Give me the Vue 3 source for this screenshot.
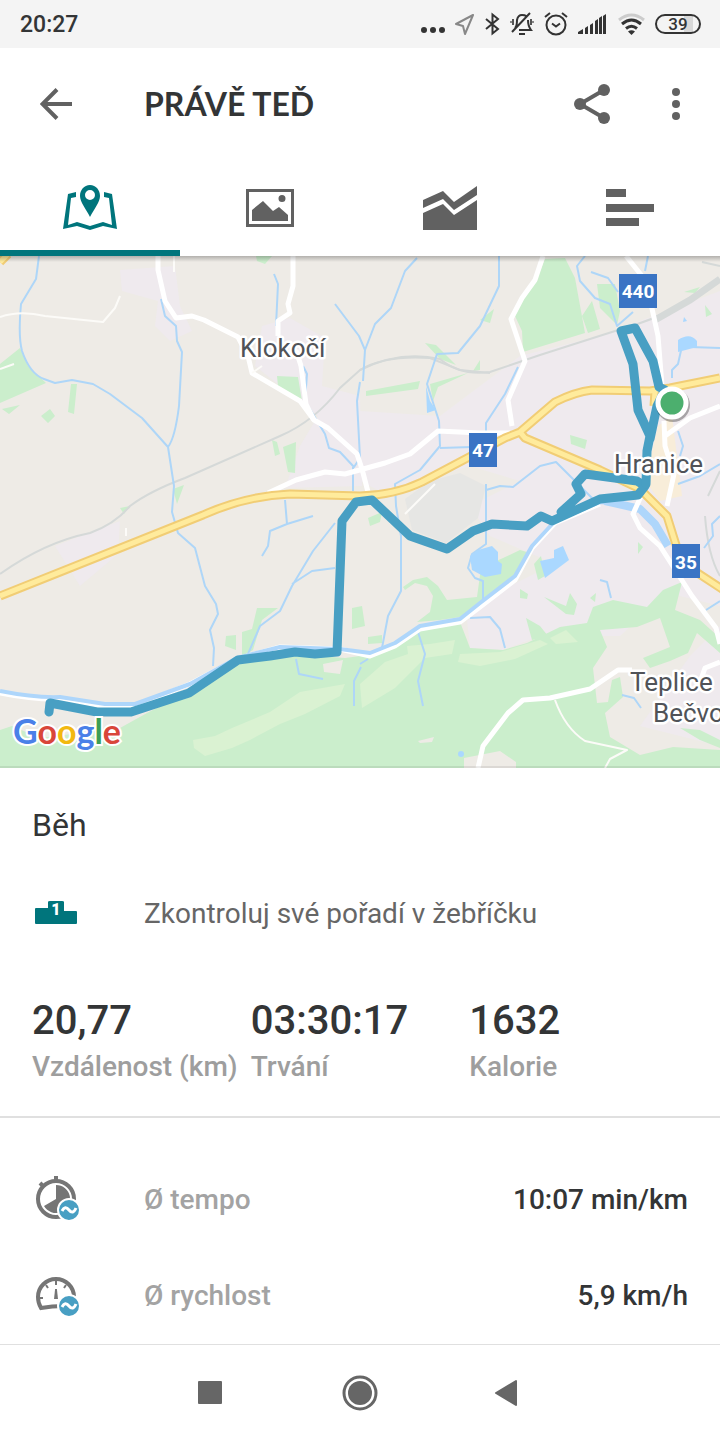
<template>
    <div class="tela">
        <div class="status">
            <span class="hora">20:27</span>
            <div class="status-icones">
                <svg width="24" height="24" viewBox="0 0 24 24" fill="#333">
                    <circle cx="3" cy="18" r="3" />
                    <circle cx="12" cy="18" r="3" />
                    <circle cx="21" cy="18" r="3" />
                </svg>
                <svg width="20" height="24" viewBox="0 0 20 24" fill="none" stroke="#888" stroke-width="2" stroke-linejoin="round">
                    <path d="M18 3L1 12L8 14L10 22Z" />
                </svg>
                <svg width="15" height="24" viewBox="0 0 15 24" fill="none" stroke="#333" stroke-width="2">
                    <path d="M1 7L13 17L7.500 21.500V2.500L13 7L1 17" />
                </svg>
                <svg width="24" height="24" viewBox="0 0 24 24" fill="none" stroke="#333" stroke-width="2">
                    <path d="M5 16Q7 14 7 8Q8 3 12 3Q15 3 16 4M18 8Q18 14 21 18H9M2 20L20 1M9 22H15" />
                    <path d="M3 7V13M21 7V13" stroke="#555" stroke-width="2" />
                    <path d="M1 9V11M23 9V11" stroke="#888" stroke-width="2" />
                </svg>
                <svg width="24" height="24" viewBox="0 0 24 24" fill="none" stroke="#333" stroke-width="2">
                    <circle cx="12" cy="13" r="9.500" />
                    <path d="M8 11.500L12 14.500L16 11.500M1 5L6 1M18 1L23 5" />
                </svg>
                <svg width="30" height="24" viewBox="0 0 30 24" fill="#333">
                    <path d="M0 22V20L5 17V22ZM7 22V16L10 14V22ZM12 22V13L15 11V22ZM17 22V9L20 7V22ZM21 22V6L24 4V22ZM25 22V4L28 2V22Z" />
                </svg>
                <svg width="27" height="24" viewBox="0 0 27 24" fill="none" stroke="#333" stroke-width="3">
                    <path d="M1 8Q13.500 -2 26 8" stroke="#ccc" />
                    <path d="M4 12Q13.500 4 23 12M8 16.500Q13.500 12 19 16.500" />
                    <path d="M10 19.500L13.500 23L17 19.500Q13.500 17 10 19.500Z" fill="#333" stroke="none" />
                </svg>
                <span class="bateria">39</span>
            </div>
        </div>

        <header class="topo">
            <button class="botao" aria-label="Zpět">
                <svg width="32" height="32" viewBox="0 0 32 32" fill="none" stroke="#616161" stroke-width="4">
                    <path d="M32 16H3M17 1.500L2.500 16L17 30.500" />
                </svg>
            </button>
            <h1>PRÁVĚ TEĎ</h1>
            <button class="botao" aria-label="Sdílet">
                <svg width="36" height="40" viewBox="0 0 36 40" fill="#616161" stroke="#616161">
                    <path d="M30 6L6 20L30 34" fill="none" stroke-width="4" />
                    <circle cx="30" cy="6" r="6" stroke="none" />
                    <circle cx="6" cy="20" r="6" stroke="none" />
                    <circle cx="30" cy="34" r="6" stroke="none" />
                </svg>
            </button>
            <button class="botao" aria-label="Další možnosti">
                <svg width="8" height="32" viewBox="0 0 8 32" fill="#616161">
                    <circle cx="4" cy="4" r="4" />
                    <circle cx="4" cy="16" r="4" />
                    <circle cx="4" cy="28" r="4" />
                </svg>
            </button>
        </header>

        <nav class="abas">
            <button v-for="aba in abas" :key="aba.id" class="aba" :class="{ ativa: aba.id === ativa }"
                :aria-label="aba.nome" @click="ativa = aba.id">
                <svg width="54" height="46" viewBox="0 0 54 46" fill="currentColor">
                    <path v-for="d in aba.formas" :key="d" :d="d" fill-rule="evenodd" />
                </svg>
            </button>
        </nav>

        <svg class="mapa" viewBox="0 0 720 512" preserveAspectRatio="xMidYMid slice" role="img" aria-label="Mapa trasy">
            <defs>
                <linearGradient id="sombra" x1="0" y1="0" x2="0" y2="1">
                    <stop offset="0" stop-color="#000" stop-opacity="0.25" />
                    <stop offset="1" stop-color="#000" stop-opacity="0" />
                </linearGradient>
            </defs>
            <rect width="720" height="512" fill="#eeebe6" />

            <!-- zástavba -->
            <g fill="#efeaee">
                <path d="M120 14L175 10L180 50L192 75L170 85L155 70L158 45L122 35Z" />
                <path d="M262 70L290 62L325 82L322 130L360 140L362 230L285 232L300 190L318 160L255 110Z" />
                <path d="M360 155L440 160L520 100L600 80L720 35V350L680 340L620 300L560 310L490 280L470 250L520 225L470 210L380 235L360 225Z" />
                <path d="M55 290L120 265L118 298L80 330Z" />
                <path d="M467 365L490 340L540 315L600 300L680 300L680 325L620 380L540 380L503 394L470 392Z" />
                <path d="M720 370L690 400L640 470L720 490Z" />
            </g>
            <path d="M405 243L430 225L460 217L486 230L478 262L446 287L412 274Z" fill="#e6e6e4" />
            <path d="M658 170L672 160L682 240L660 245L645 225Z" fill="#f8edd9" />

            <!-- lesy a parky -->
            <g fill="#cbeecc">
                <path d="M0 512V474L12 470L40 482L120 472L147 457L190 435L237 403L300 396L318 400L345 402L360 400L385 392L420 371L460 366L467 384L470 392L503 394L527 387L560 371L587 367L593 351L613 344L647 351L663 334L682 326L675 354L700 364L720 382V397L697 377L688 397L670 405L650 412L643 402L670 391L660 362L637 371L600 374L607 391L593 412L597 447L608 446L612 424L620 421L623 441L605 457L610 481L640 499L673 491L720 494V512Z" />
                <path d="M403 331L413 324L427 321L438 330L447 344L477 341L481 312L503 302L520 294L530 297L520 317L480 349L460 361L440 364L417 366L430 356L433 340L427 330L415 327L405 334ZM368 381L382 379L382 387L368 388ZM680 472L700 474L720 484V492L700 484Z" />
                <path d="M0 108L20 92L28 110L46 127L0 147Z" />
                <path d="M2 153L20 149L9 158ZM41 160L50 153L55 160L48 167ZM71 128H77L74 158L68 156Z" />
                <path d="M277 120L298 121L302 145L278 130ZM272 184L277 186L280 198L275 200ZM283 191L296 186L295 217L288 216ZM173 233L184 229L177 248ZM256 0H272L265 8L257 5ZM120 252L130 250L124 258ZM368 262L382 256L380 266L370 270Z" />
                <path d="M545 3L565 2L575 22L585 77L523 96L522 75L515 60L524 38L536 25ZM582 60L592 45L600 73L588 77ZM597 28L615 28L620 55L617 69L600 52Z" />
                <path d="M480 64L494 53L490 67ZM425 87L436 89L456 109L440 103ZM473 115L480 104L480 114ZM430 128L468 117L438 131L433 145ZM366 135L420 125L418 133L366 140ZM570 179L587 184L585 193L571 188Z" />
                <path d="M257 352L278 352L262 364L253 394L242 400V376L252 373ZM226 380L236 379L236 394L225 390ZM352 352L362 350L365 370L352 373Z" />
                <path d="M520 333L528 338L527 343L520 342ZM544 341L566 350L570 337L577 348L574 359L566 358ZM526 362L540 370L548 380L532 384ZM590 342L596 337L595 346ZM638 286L643 291L638 298ZM534 308L541 300L545 320L538 324ZM705 49L712 58L706 61ZM684 36L700 31L695 37Z" />
            </g>
            <g fill="#daf2d2">
                <path d="M193 484L215 480L232 472L270 456L300 436L345 428L340 440L305 458L280 468L250 484L232 492L205 500L194 492Z" />
                <path d="M407 390L430 388L455 384L452 398L425 402L395 432L362 452L360 428L385 406L408 398ZM460 398L500 396L540 384L548 388L515 403L480 410L458 406ZM550 382L566 374L578 386L556 388Z" />
            </g>
            <path d="M323 408L343 404L340 418L324 416ZM418 485L434 481L432 486L420 487ZM464 502L500 495L516 506V512H464Z" fill="#eeebe6" />

            <!-- železnice -->
            <g fill="none" stroke="#d5d9d8" stroke-width="2">
                <path d="M0 318Q45 286 90 277Q115 268 130 250Q150 235 185 222L280 180Q315 165 340 132L360 114Q400 94 440 103Q460 120 490 116L540 99L615 75Q650 66 690 45L720 24" />
                <path d="M360 114Q385 99 430 102L460 114L490 117" />
                <path d="M705 260Q708 300 720 320M708 240L720 215M702 6L720 10" />
            </g>
            <path d="M655 64L690 44L720 23" fill="none" stroke="#d5d9d8" stroke-width="7" />

            <!-- vodní toky -->
            <g fill="none" stroke="#aed6f8" stroke-width="2" stroke-linejoin="round">
                <path d="M39 0L36 23L21 48Q18 80 22 95Q30 118 44 123L55 127L72 124L93 128L110 138L142 162L168 191L174 230L172 256L178 277L195 292L205 330L216 348L218 358L210 374L214 392L213 410" />
                <path d="M161 43L165 60L176 70L177 85L182 96L179 150Q175 182 168 191" />
                <path d="M274 18L278 28L276 70M303 110L307 118L305 145L325 178L329 192L340 196L354 211L360 202L357 145L360 126M353 211V235M335 48L359 80L365 94L363 125M365 94L375 68L391 52L405 15L417 2M499 0V30L480 70L458 97L437 98L427 128L439 165L440 190L420 214L395 228L396 250L401 280V335L388 360L382 392" />
                <path d="M518 111L505 138L486 167V177M440 192L472 191M486 228V288L472 298L468 312L475 322L483 325V343M486 234L500 230L513 231L540 210L556 206L575 225L600 250M585 0L577 10L580 25L595 42L610 48L617 70L633 56M591 16L608 22L618 36M645 15L648 0" />
                <path d="M285 244L287 268L313 260M287 268L270 275L268 290L262 300M335 267L313 295L292 330L280 355L260 370L248 398M292 328L312 315L335 312M296 403L299 418L323 423M418 376L425 398L418 425L423 450M470 362L490 361L500 373L505 392M600 324L607 326L611 342M361 411L354 425V450M360 408L368 403" />
                <path d="M720 92L690 91L682 90L678 108L672 114V122M678 175L683 190L680 200M678 228L700 220L720 208M706 354L720 345M622 439L634 442L641 452M720 260L712 268L713 280L704 292" />
            </g>
            <g fill="none" stroke-linejoin="round">
                <path d="M0 437Q35 444 60 443L105 450H135L190 428L237 403L280 391L340 393L370 400L395 390L420 373L460 366L480 351L515 324L532 292L555 267L600 248" stroke="#fff" stroke-width="5" />
                <path d="M0 435Q35 442 60 441L105 448H135L190 428L237 402L280 391L340 393L370 397L395 387L420 370L460 363L480 347L515 320L532 290L555 265L600 246L628 249" stroke="#aed6fb" stroke-width="4" />
                <path d="M605 245L640 253L655 268L668 290" stroke="#aed6fb" stroke-width="8" />
            </g>
            <g fill="#aad8ff">
                <path d="M470 300L478 294L492 290L498 296L498 305L502 308L501 318L485 321L472 314ZM540 305L554 302V294L563 290L569 304L545 322ZM426 130L430 145L436 154L427 157ZM678 84Q690 76 697 85V91L678 96ZM684 61L687 65L683 66Z" />
                <circle cx="461" cy="498" r="3" />
            </g>

            <!-- silnice -->
            <g fill="none" stroke="#fff" stroke-linejoin="round">
                <g stroke-width="5">
                    <path d="M158 0V14L165 45L176 62L192 60L204 64L238 81L248 100L252 117L300 145L314 164L328 172L357 198L362 213L368 236M268 237L296 224L325 216L345 218L385 207L410 198L438 175L480 177L510 177" />
                    <path d="M293 0V30L288 48L290 57L278 65V80M296 94L301 110L306 148L314 164M543 0L535 24L522 42L511 63L525 105L508 144L512 170" />
                    <path d="M626 0L646 25L658 80L662 130M664 165L665 190L674 218L667 250M642 238L633 258L640 272L660 290L692 340L716 372L720 388M478 512L483 490L508 457L523 444L550 442L590 433L618 414H632M665 180L690 162L720 150M720 406L705 412L700 426" />
                </g>
                <g stroke-width="2" stroke="#fcfbf8">
                    <path d="M0 61Q20 54 45 60L103 66L115 52L120 40M174 0V16M555 444Q565 472 585 485L627 494L610 503L605 512M405 258L435 228M252 117L262 110M0 113L14 108M126 272V280" />
                </g>
            </g>
            <g fill="none" stroke-linejoin="round">
                <path v-for="cor in ['#f1cd75', '#ffeb9c']" :key="cor" class="estrada" :class="{ miolo: cor === '#ffeb9c' }" :stroke="cor"
                    d="M0 340L203 259Q245 240 290 238L360 240Q395 239 422 226L505 182L520 176L555 146Q575 136 592 134L650 135L670 132L720 122M520 176L525 182L600 214L640 233L667 260L677 292L690 312L725 335M655 135L654 150M0 6L8 -2" />
            </g>

            <!-- uběhnutá trasa -->
            <g fill="none" stroke="#489fc3" stroke-width="9" stroke-linejoin="round" stroke-linecap="round">
                <path d="M49 456L50 447L97 456L131 456L189 437L238 404L270 400L295 396L315 398L337 396L342 265L356 246L372 244L410 280L447 293L473 275L492 268L527 270L541 260L552 265L600 243L638 239L645 230L637 225L585 218L576 228L581 238L561 256" />
                <path d="M646 228L647 195L650 180L638 154L633 108L621 75L635 72L653 105L659 131L665 134L657 150L650 183" />
            </g>
            <circle cx="673" cy="149" r="17" fill="#000" opacity="0.3" />
            <circle cx="672" cy="147" r="14" fill="#4caf6e" stroke="#fff" stroke-width="5" />

            <g class="rotulo">
                <text x="240" y="101">Klokočí</text>
                <text x="614" y="217">Hranice</text>
                <text x="630" y="435">Teplice</text>
                <text x="653" y="466">Bečvo</text>
            </g>
            <g fill="#3a74c4">
                <rect x="619" y="18" width="38" height="34" />
                <rect x="469" y="177" width="28" height="34" />
                <rect x="672" y="288" width="28" height="34" />
            </g>
            <g class="placa">
                <text x="638" y="42">440</text>
                <text x="483" y="201">47</text>
                <text x="686" y="313">35</text>
            </g>
            <text class="google" x="13" y="488"><tspan fill="#4a80e8">G</tspan><tspan fill="#d9463a">o</tspan><tspan fill="#f2b810">o</tspan><tspan fill="#4a80e8">g</tspan><tspan fill="#3d9e55">l</tspan><tspan fill="#d9463a">e</tspan></text>
            <rect width="720" height="6" fill="url(#sombra)" />
            <rect y="510" width="720" height="2" fill="#000" opacity="0.08" />
        </svg>

        <main>
            <h2>Běh</h2>
            <a class="linha ranking" href="#">
                <svg width="48" height="48" viewBox="0 0 48 48">
                    <path d="M3 20Q3 19 4 19H16V13Q16 12 18 12H30Q32 12 32 13V22H44Q45 22 45 23V34Q45 35 44 35H4Q3 35 3 34Z" fill="#00757c" />
                    <text class="podio" x="24" y="26">1</text>
                </svg>
                <span>Zkontroluj své pořadí v žebříčku</span>
            </a>
            <dl class="resumo">
                <div v-for="item in resumo" :key="item.rotulo">
                    <dt>{{ item.rotulo }}</dt>
                    <dd>{{ item.valor }}</dd>
                </div>
            </dl>
            <div class="medidas">
                <div class="linha">
                    <svg width="48" height="48" viewBox="0 0 48 48">
                        <circle cx="24" cy="24" r="18" fill="none" stroke="#757575" stroke-width="4" />
                        <path d="M24 1V6M8 8L11 11" stroke="#757575" stroke-width="4" />
                        <path d="M24 24V10A14 14 0 1 1 12 31Z" fill="#757575" />
                        <use href="#media" />
                    </svg>
                    <span class="nome">Ø tempo</span>
                    <span class="valor">10:07 min/km</span>
                </div>
                <div class="linha">
                    <svg width="48" height="48" viewBox="0 0 48 48">
                        <path d="M32 35Q20 35 9 37Q6 32 6 26A18 18 0 0 1 42 26V28" fill="none" stroke="#757575" stroke-width="4" />
                        <path d="M24 9V14M14 14L16 17M34 14L32 17M7 27H11M24 18V25" fill="none" stroke="#757575" stroke-width="2" />
                        <path d="M23 19H25L26 28H22Z" fill="#757575" />
                        <g id="media">
                            <circle cx="37" cy="35" r="11" fill="#489fc3" stroke="#fff" stroke-width="2" />
                            <path d="M30 36Q33 30 37 35T44 33" fill="none" stroke="#fff" stroke-width="3" />
                        </g>
                    </svg>
                    <span class="nome">Ø rychlost</span>
                    <span class="valor">5,9 km/h</span>
                </div>
            </div>
        </main>

        <footer class="sistema">
            <button class="botao" aria-label="Poslední aplikace">
                <svg width="36" height="36" viewBox="0 0 36 36"><rect x="6" y="6" width="24" height="23" rx="1" fill="#666" /></svg>
            </button>
            <button class="botao" aria-label="Domů">
                <svg width="36" height="36" viewBox="0 0 36 36">
                    <circle cx="18" cy="18" r="16" fill="none" stroke="#666" stroke-width="3" />
                    <circle cx="18" cy="18" r="12" fill="#666" />
                </svg>
            </button>
            <button class="botao" aria-label="Zpět">
                <svg width="36" height="36" viewBox="0 0 36 36"><path d="M4 18L24 6V30Z" fill="#666" stroke="#666" stroke-linejoin="round" stroke-width="2" /></svg>
            </button>
        </footer>
    </div>
</template>

<script setup>
import { ref } from 'vue'

const ativa = ref('mapa')

const abas = [
    {
        id: 'mapa',
        nome: 'Mapa',
        formas: [
            'M27 0C33 0 37 5 37 11C37 17 31 24 27 32C23 24 17 17 17 11C17 5 21 0 27 0ZM27 5A5 5 0 1 0 27 15A5 5 0 1 0 27 5Z',
            'M5 9L13 7V12L8 13L5 40L14 37L27 41L40 37L49 40L46 13L41 12V7L49 9L54 44L40 41L27 45L14 41L0 44Z'
        ]
    },
    {
        id: 'foto',
        nome: 'Fotky',
        formas: [
            'M3 4H51V42H3ZM6 7V39H48V7Z',
            'M9 25L20 16L30 26L36 22L45 30V36H9ZM39 10A3 3 0 1 0 39 17A3 3 0 1 0 39 10Z'
        ]
    },
    {
        id: 'grafico',
        nome: 'Grafy',
        formas: ['M0 15L20 6L31 17L54 1V10L31 25L20 14L0 23Z', 'M0 28L20 19L31 30L54 15V45H0Z']
    },
    {
        id: 'trechos',
        nome: 'Mezičasy',
        formas: ['M3 4H23V12H3Z', 'M3 19H51V27H3Z', 'M3 33H36V41H3Z']
    }
]

const resumo = [
    { rotulo: 'Vzdálenost (km)', valor: '20,77' },
    { rotulo: 'Trvání', valor: '03:30:17' },
    { rotulo: 'Kalorie', valor: '1632' }
]
</script>

<style>
body {
    margin: 0;
    background: #fff;
}
</style>

<style scoped>
.tela {
    font-family: Roboto, "Liberation Sans", sans-serif;
    color: #333536;
    background: #fff;
}

svg {
    display: block;
    flex: none;
}

button {
    padding: 0;
    border: 0;
    background: none;
    cursor: pointer;
}

.status {
    display: flex;
    align-items: center;
    justify-content: space-between;
    height: 48px;
    padding: 0 19px 0 20px;
    background: #f4f4f4;
}

.hora {
    font-size: 23px;
    font-weight: 500;
}

.status-icones {
    display: flex;
    align-items: center;
    gap: 10px;
}

.bateria {
    box-sizing: border-box;
    width: 46px;
    height: 20px;
    border: 2px solid #333;
    border-radius: 10px;
    background: linear-gradient(90deg, #f4f4f4 65%, #d8d8d8 65%, #d8d8d8 85%, #f4f4f4 85%);
    font-size: 17px;
    font-weight: 500;
    line-height: 16px;
    text-align: center;
}

.topo {
    display: flex;
    align-items: center;
    height: 112px;
    padding: 0 40px;
}

.topo h1 {
    flex: 1;
    margin: 0 0 0 72px;
    padding-bottom: 2px;
    font-family: Lato, sans-serif;
    font-size: 32px;
    font-weight: 700;
}

.topo .botao + .botao {
    margin-left: 62px;
}

.abas {
    display: grid;
    grid-template-columns: repeat(4, 1fr);
}

.aba {
    display: flex;
    justify-content: center;
    padding: 25px 0 19px;
    border-bottom: 6px solid transparent;
    color: #616161;
}

.aba.ativa {
    border-color: #00757c;
    color: #00757c;
}

.mapa {
    width: 100%;
    height: auto;
}

.estrada {
    stroke-width: 9px;
}

.estrada.miolo {
    stroke-width: 5px;
}

.rotulo {
    font-size: 26px;
    fill: #505358;
    stroke: #fff;
    stroke-width: 5px;
    stroke-linejoin: round;
    paint-order: stroke;
}

.placa {
    font-size: 19px;
    font-weight: 700;
    fill: #fff;
    text-anchor: middle;
}

.google {
    font-family: Lato, sans-serif;
    font-size: 34px;
    font-weight: 700;
    stroke: #fff;
    stroke-width: 4px;
    paint-order: stroke;
}

h2 {
    margin: 0;
    padding: 37px 32px 20px;
    font-size: 32px;
    font-weight: 400;
    line-height: 40px;
}

.linha {
    display: flex;
    align-items: center;
    height: 96px;
    padding: 0 32px;
    font-size: 28px;
}

.linha span:first-of-type {
    margin-left: 64px;
}

.ranking {
    color: #666;
    text-decoration: none;
}

.podio {
    font-size: 16px;
    font-weight: 900;
    fill: #fff;
    text-anchor: middle;
}

.resumo {
    display: grid;
    grid-template-columns: repeat(3, 1fr);
    margin: 0;
    padding: 36px 32px 27px;
    border-bottom: 2px solid #e0e0e0;
}

.resumo div {
    display: flex;
    flex-direction: column-reverse;
    white-space: nowrap;
}

.resumo dd {
    margin: 0;
    font-size: 40px;
    font-weight: 500;
    line-height: 48px;
}

.resumo dt {
    font-size: 28px;
    font-weight: 500;
    line-height: 44px;
    color: #9e9e9e;
}

.medidas {
    padding: 33px 0 1px;
    font-weight: 500;
}

.linha .nome {
    flex: 1;
    color: #a3a3a3;
}

.sistema {
    display: flex;
    justify-content: center;
    gap: 114px;
    padding: 30px 0 29px;
    border-top: 1px solid #e0e0e0;
}
</style>
